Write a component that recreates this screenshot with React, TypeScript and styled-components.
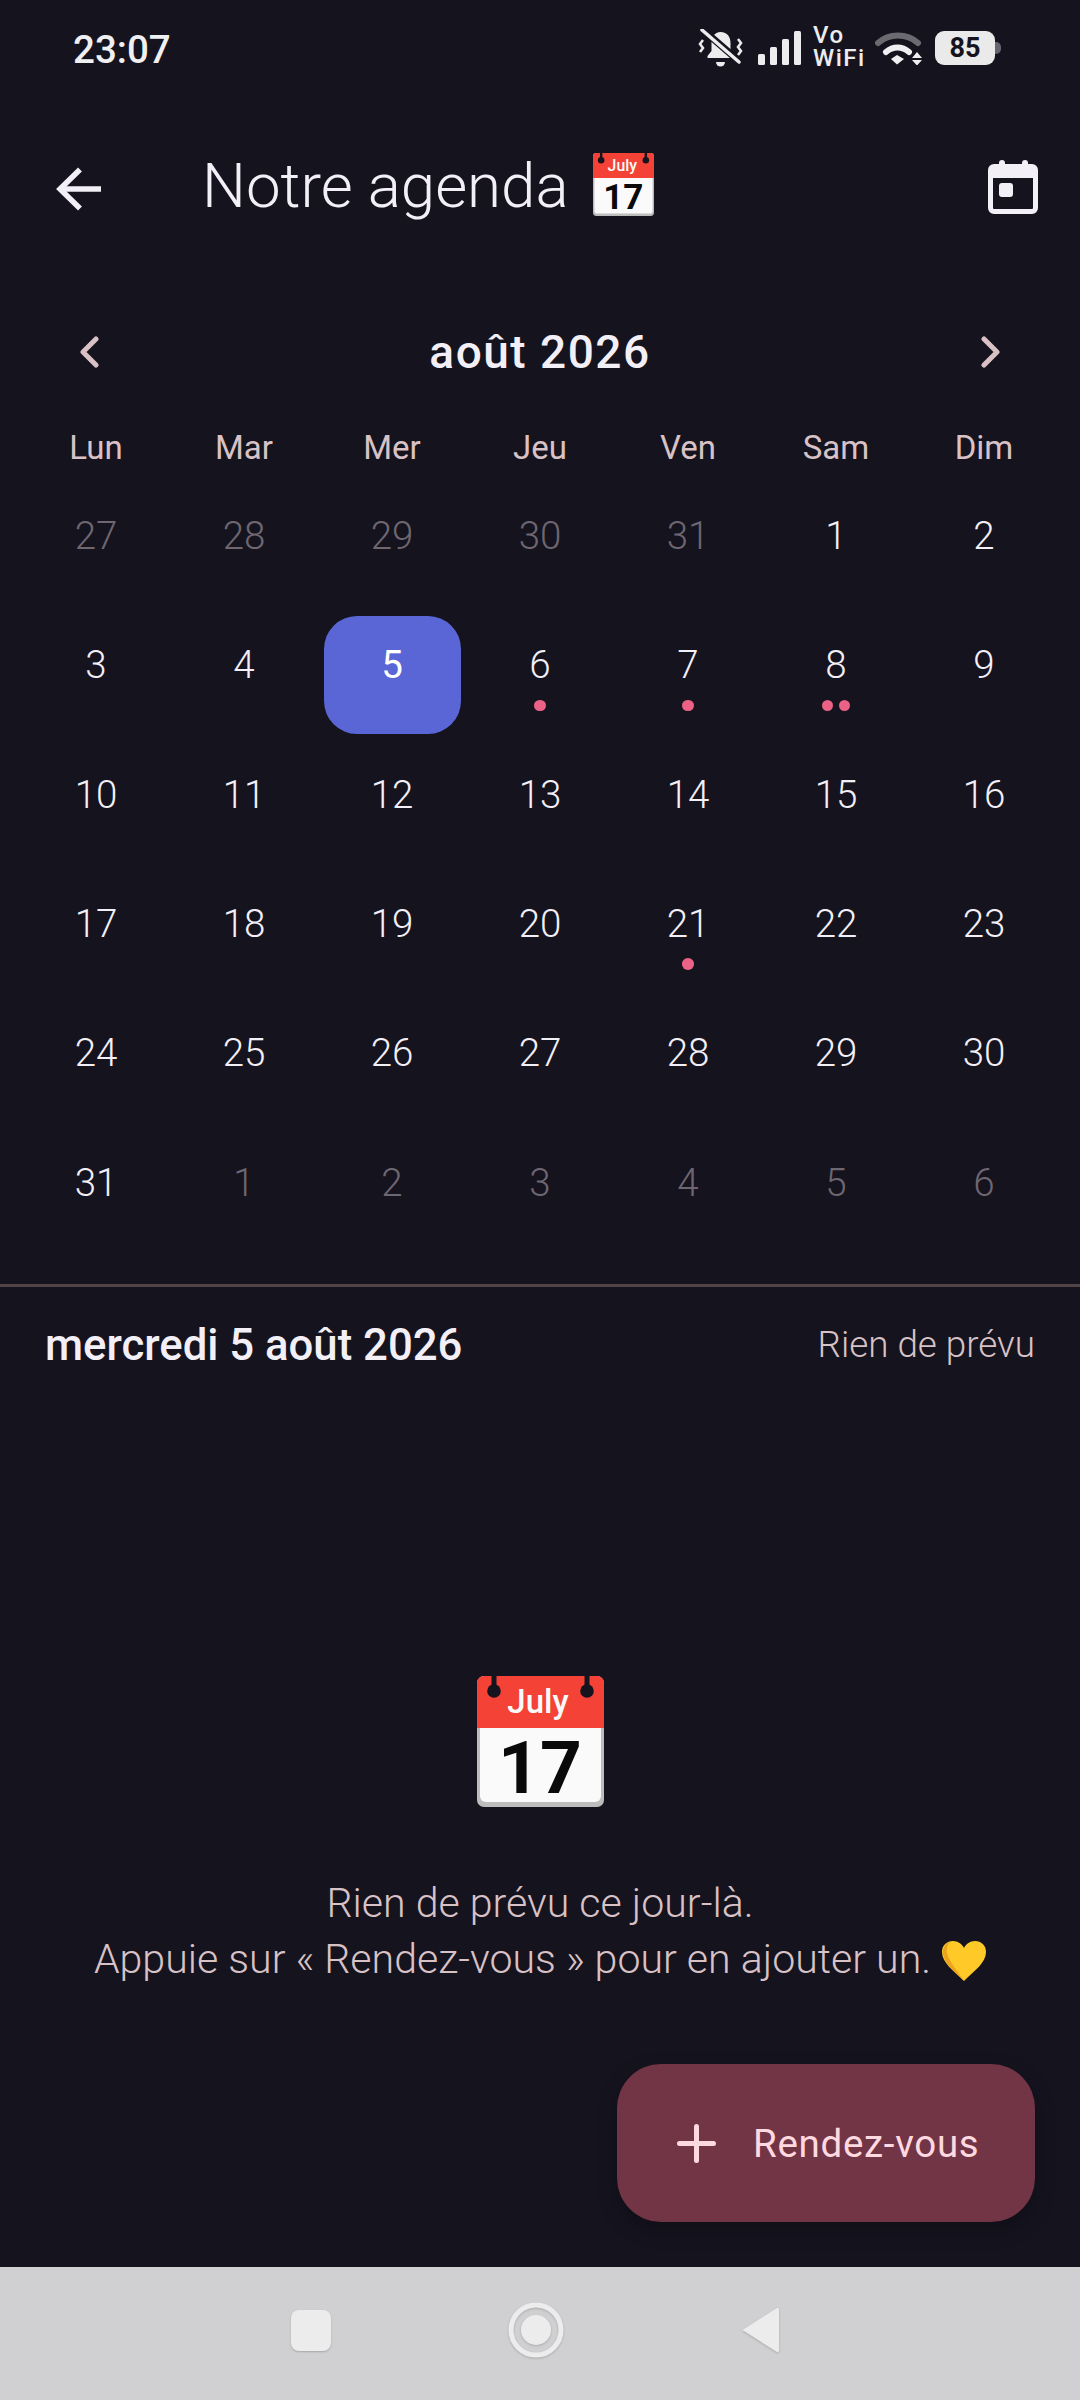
import React from 'react';
import styled, { createGlobalStyle } from 'styled-components';

const GlobalStyle = createGlobalStyle`
  html, body {
    margin: 0;
    padding: 0;
    background: #15131e;
    font-family: Roboto, "Liberation Sans", sans-serif;
  }
`;

const Page = styled.div`
  position: relative;
  width: 1080px;
  height: 2400px;
  display: flex;
  flex-direction: column;
  background: #15131e;
  overflow: hidden;
`;

const StatusBar = styled.div`
  height: 96px;
  display: flex;
  align-items: center;
  justify-content: space-between;
  padding: 0 79px 0 73px;
  box-sizing: border-box;
  color: #f0eff2;
`;

const Time = styled.span`
  margin-top: 2px;
  font-size: 38.5px;
  font-weight: 500;
`;

const StatusIcons = styled.div`
  display: flex;
  align-items: center;
  gap: 12px;
`;

const VoWifi = styled.div`
  width: 53px;
  margin-bottom: 3px;
  font-size: 24px;
  font-weight: 500;
  letter-spacing: 1.5px;
  line-height: 23px;
  color: #ececee;
`;

const BellSvg = styled.svg`
  margin-right: 3px;
`;

const WifiSvg = styled.svg`
  margin-left: -3px;
`;

const Battery = styled.div`
  position: relative;
  width: 60px;
  height: 34px;
  margin-right: 6px;
  border-radius: 9px;
  background: #eaeaea;
  color: #15131e;
  font-size: 27px;
  font-weight: 700;
  line-height: 34px;
  text-align: center;

  &::after {
    content: '';
    position: absolute;
    top: 11px;
    right: -6px;
    width: 6px;
    height: 12px;
    border-radius: 0 5px 5px 0;
    background: #66656c;
  }
`;

const AppBar = styled.div`
  height: 180px;
  display: flex;
  align-items: center;
  padding: 0 42px 0 54px;
  box-sizing: border-box;
  color: #f3eff7;
`;

const BackSvg = styled.svg`
  margin-top: 6px;
`;

const Title = styled.h1`
  flex: 1;
  display: flex;
  align-items: center;
  gap: 24px;
  margin: 0 0 0 101px;
  font-size: 61.8px;
  font-weight: 300;
  color: #f3eff7;
`;

const MonthHeader = styled.div`
  height: 88px;
  margin-top: 32px;
  display: flex;
  align-items: center;
  justify-content: space-between;
  padding: 0 79px;
  color: #d8c2c6;
`;

const MonthLabel = styled.span`
  font-size: 46px;
  font-weight: 500;
  letter-spacing: 1.5px;
  color: #f3eff7;
`;

const WeekRow = styled.div`
  margin-top: 32px;
  padding: 0 27.5px;
  display: grid;
  grid-template-columns: repeat(7, 137px);
  column-gap: 11px;
`;

const WeekDay = styled.span`
  font-size: 33px;
  font-weight: 400;
  line-height: 40px;
  text-align: center;
  color: #d8c2c6;
`;

const DayGrid = styled.div`
  margin-top: 19px;
  padding: 0 27.5px;
  display: grid;
  grid-template-columns: repeat(7, 137px);
  grid-auto-rows: 118px;
  column-gap: 11px;
  row-gap: 11.33px;
`;

const DayCell = styled.div<{ $selected?: boolean }>`
  display: flex;
  flex-direction: column;
  align-items: center;
  padding-top: 29px;
  box-sizing: border-box;
  border-radius: 33px;
  background: ${p => (p.$selected ? '#5b66d6' : 'transparent')};
`;

const DayNumber = styled.span<{ $muted?: boolean; $selected?: boolean }>`
  font-size: 38.5px;
  line-height: 40px;
  font-weight: ${p => (p.$selected ? 400 : 300)};
  color: ${p => (p.$selected ? '#ffffff' : p.$muted ? '#6e6670' : '#f3eff7')};
`;

const Dots = styled.div`
  display: flex;
  gap: 5.5px;
  margin-top: 14.5px;
`;

const Dot = styled.span`
  width: 11.5px;
  height: 11.5px;
  border-radius: 50%;
  background: #ec6186;
`;

const Divider = styled.div`
  height: 3px;
  margin-top: 32px;
  background: #524347;
`;

const DayHeader = styled.div`
  height: 52px;
  margin-top: 32px;
  padding: 0 45px;
  display: flex;
  align-items: center;
  justify-content: space-between;
`;

const DayTitle = styled.span`
  font-size: 43.7px;
  font-weight: 500;
  color: #f3eff7;
`;

const DaySummary = styled.span`
  font-size: 36.8px;
  font-weight: 300;
  color: #d8c2c6;
`;

const Empty = styled.div`
  flex: 1;
  display: flex;
  flex-direction: column;
  align-items: center;
  padding-top: 305px;
`;

const EmptyText = styled.p`
  margin: 63px 0 0;
  font-size: 41.1px;
  font-weight: 300;
  line-height: 56px;
  text-align: center;
  color: #d8c2c6;

  svg {
    vertical-align: -8px;
    margin-left: 1px;
  }
`;

const Fab = styled.button`
  position: absolute;
  right: 45px;
  bottom: 178px;
  width: 418px;
  height: 158px;
  display: flex;
  align-items: center;
  gap: 37px;
  padding: 0 0 0 60px;
  box-sizing: border-box;
  border: none;
  border-radius: 44px;
  background: #723545;
  box-shadow: 0 8px 20px rgba(0, 0, 0, 0.25);
  color: #ffd9e0;
  font-family: inherit;
  font-size: 38.5px;
  font-weight: 400;
  letter-spacing: 0.7px;
`;

const NavBar = styled.div`
  height: 133px;
  display: flex;
  align-items: center;
  justify-content: center;
  gap: 177px;
  padding: 0 11px 7px 0;
  box-sizing: border-box;
  background: #d0d0d2;
`;

const NavSquare = styled.span`
  width: 40px;
  height: 41px;
  border-radius: 8px;
  background: #ececec;
  box-shadow: 0 1px 2px rgba(0, 0, 0, 0.2);
`;

const NavShape = styled.svg`
  display: block;
  filter: drop-shadow(0 1px 1px rgba(0, 0, 0, 0.18));
`;

const CalendarEmoji = ({ size }: { size: number }) => (
  <svg width={size} height={size * (136 / 127)} viewBox="0 0 127 136">
    <path d="M7 0h113a7 7 0 0 1 7 7v117a7 7 0 0 1-7 7H7a7 7 0 0 1-7-7V7a7 7 0 0 1 7-7z" fill="#bdbdbd" />
    <path d="M3 51h121v69a6 6 0 0 1-6 6H9a6 6 0 0 1-6-6z" fill="#fafafa" />
    <path d="M7 0h113a7 7 0 0 1 7 7v45H0V7a7 7 0 0 1 7-7z" fill="#f44336" />
    <rect x="14.5" y="0" width="5" height="14" fill="#15131e" />
    <rect x="107.500" y="0" width="5" height="14" fill="#15131e" />
    <circle cx="17" cy="15" r="6.800" fill="#15131e" />
    <circle cx="110" cy="15" r="6.800" fill="#15131e" />
    <text x="61" y="37" textAnchor="middle" fontFamily="Roboto" fontSize="33" fontWeight="500" fill="#fafafa">July</text>
    <text x="63" y="117" textAnchor="middle" fontFamily="Roboto" fontSize="73" fontWeight="700" fill="#0a0a0a">17</text>
  </svg>
);

const BellOffIcon = () => (
  <BellSvg width="45" height="38" viewBox="0 0 45 38">
    <path d="M22.500 3c-6 0-9 5-9 11v8l-4 5v2h27v-2l-4-5v-8c0-6-3-11-10-11z" fill="#ececee" />
    <path d="M18 33h9a4.500 4.500 0 0 1-9 0z" fill="#ececee" />
    <path d="M4 0l38 33" stroke="#15131e" strokeWidth="7" />
    <path d="M4 1l37 32" stroke="#ececee" strokeWidth="3.500" strokeLinecap="round" />
    <path d="M5 11l-3 4 3 4-3 4" fill="none" stroke="#ececee" strokeWidth="2.500" />
    <path d="M40 10l3 4-3 4 3 4-3 4" fill="none" stroke="#ececee" strokeWidth="2.500" />
  </BellSvg>
);

const SignalIcon = () => (
  <svg width="43" height="34" viewBox="0 0 43 34" fill="#ececee">
    <rect x="0" y="23" width="7" height="11" rx="1.500" />
    <rect x="12" y="16" width="7" height="18" rx="1.500" />
    <rect x="24" y="8" width="7" height="26" rx="1.500" />
    <rect x="36" y="0" width="7" height="34" rx="1.500" />
  </svg>
);

const WifiIcon = () => (
  <WifiSvg width="48" height="33" viewBox="0 0 48 33">
    <path d="M3 11c11-10 29-10 40 0" fill="none" stroke="#6b6a70" strokeWidth="6" strokeLinecap="round" />
    <path d="M11 20c7-6 16-6 23 0" fill="none" stroke="#f0f0f2" strokeWidth="6" strokeLinecap="round" />
    <path d="M16 27l6-4 7 4-7 5.500z" fill="#f0f0f2" />
    <path d="M37 26h10l-5-6zM37 28h10l-5 5.500z" fill="#f0f0f2" />
  </WifiSvg>
);

const BackIcon = () => (
  <BackSvg width="47" height="46" viewBox="0 0 47 46" fill="none" stroke="currentColor" strokeWidth="5.500">
    <path d="M26 3.500L6 23l20 19.500" />
    <path d="M6 23h41" />
  </BackSvg>
);

const CalendarIcon = () => (
  <svg width="50" height="56" viewBox="0 0 50 56" fill="currentColor">
    <path d="M11 5a3 3 0 0 1 6 0v1h17V5a3 3 0 0 1 6 0v1h4a6 6 0 0 1 6 6v38a6 6 0 0 1-6 6H6a6 6 0 0 1-6-6V12a6 6 0 0 1 6-6h5zM5 20v30a1 1 0 0 0 1 1h38a1 1 0 0 0 1-1V20z" fillRule="evenodd" />
    <rect x="11" y="25" width="14" height="14" rx="3" />
  </svg>
);

const ChevronIcon = ({ flip }: { flip?: boolean }) => (
  <svg width="21" height="32" viewBox="0 0 21 32" fill="none" stroke="currentColor" strokeWidth="5" strokeLinecap="round" strokeLinejoin="round">
    <path d={flip ? 'M4 3l13 13L4 29' : 'M17 3L4 16l13 13'} />
  </svg>
);

const HeartIcon = () => (
  <svg width="44" height="40" viewBox="0 0 44 40">
    <path d="M22 40C12 30 0 22 0 11 0 4 5 0 11 0c5 0 9 3 11 7 2-4 6-7 11-7 6 0 11 4 11 11 0 11-12 19-22 29z" fill="#ffca28" />
    <path d="M22 40C13 31 1 22 1 11 1 6 4 2 8 1 5 4 4 8 5 12c2 9 11 18 17 28z" fill="#eba41c" />
  </svg>
);

const PlusIcon = () => (
  <svg width="39" height="39" viewBox="0 0 39 39" stroke="currentColor" strokeWidth="5" strokeLinecap="round">
    <path d="M19.500 2.500v34M2.500 19.500h34" />
  </svg>
);

type Day = { n: number; muted?: boolean; selected?: boolean; dots?: number };

const buildDays = (): Day[] => {
  const dots: Record<number, number> = { 6: 1, 7: 1, 8: 2, 21: 1 };
  const before = [27, 28, 29, 30, 31].map(n => ({ n, muted: true }));
  const month = Array.from({ length: 31 }, (_, i) => ({
    n: i + 1,
    selected: i + 1 === 5,
    dots: dots[i + 1],
  }));
  const after = [1, 2, 3, 4, 5, 6].map(n => ({ n, muted: true }));
  return [...before, ...month, ...after];
};

const WEEK = ['Lun', 'Mar', 'Mer', 'Jeu', 'Ven', 'Sam', 'Dim'];

const App: React.FC = () => (
  <Page>
    <GlobalStyle />
    <StatusBar>
      <Time>23:07</Time>
      <StatusIcons>
        <BellOffIcon />
        <SignalIcon />
        <VoWifi>Vo<br />WiFi</VoWifi>
        <WifiIcon />
        <Battery>85</Battery>
      </StatusIcons>
    </StatusBar>

    <AppBar>
      <BackIcon />
      <Title>
        Notre agenda
        <CalendarEmoji size={61} />
      </Title>
      <CalendarIcon />
    </AppBar>

    <MonthHeader>
      <ChevronIcon />
      <MonthLabel>août 2026</MonthLabel>
      <ChevronIcon flip />
    </MonthHeader>

    <WeekRow>
      {WEEK.map(d => <WeekDay key={d}>{d}</WeekDay>)}
    </WeekRow>

    <DayGrid>
      {buildDays().map((d, i) => (
        <DayCell key={i} $selected={d.selected}>
          <DayNumber $muted={d.muted} $selected={d.selected}>{d.n}</DayNumber>
          {d.dots && (
            <Dots>
              {Array.from({ length: d.dots }, (_, j) => <Dot key={j} />)}
            </Dots>
          )}
        </DayCell>
      ))}
    </DayGrid>

    <Divider />

    <DayHeader>
      <DayTitle>mercredi 5 août 2026</DayTitle>
      <DaySummary>Rien de prévu</DaySummary>
    </DayHeader>

    <Empty>
      <CalendarEmoji size={127} />
      <EmptyText>
        Rien de prévu ce jour-là.<br />
        Appuie sur « Rendez-vous » pour en ajouter un. <HeartIcon />
      </EmptyText>
    </Empty>

    <Fab>
      <PlusIcon />
      Rendez-vous
    </Fab>

    <NavBar>
      <NavSquare />
      <NavShape width="56" height="56" viewBox="0 0 56 56">
        <circle cx="28" cy="28" r="25" fill="none" stroke="#ececec" strokeWidth="5" />
        <circle cx="28" cy="28" r="15" fill="#ececec" />
      </NavShape>
      <NavShape width="38" height="46" viewBox="0 0 38 46">
        <path d="M36 1L1.500 23 36 45a1.500 1.500 0 0 0 2-1.500v-41A1.500 1.500 0 0 0 36 1z" fill="#ececec" />
      </NavShape>
    </NavBar>
  </Page>
);

export default App;
